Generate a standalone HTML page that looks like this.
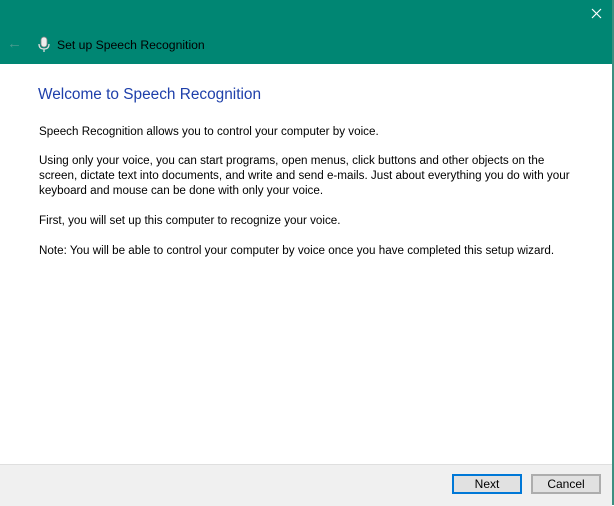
<!DOCTYPE html>
<html><head><style>
body{margin:0;width:614px;height:505px;overflow:hidden;background:#fff;font-family:"Liberation Sans",sans-serif;position:relative}
.hdr{position:absolute;left:0;top:0;width:612px;height:64px;background:#008673}
.rb{position:absolute;right:0;top:0;width:2px;height:505px;background:#3c8f80}
.t{position:absolute;left:57px;top:38px;font-size:12.2px;color:#000}
.arr{position:absolute;left:7px;top:35px;color:#4a9c8f;font-size:15px}
h1{position:absolute;left:38px;top:86px;margin:0;font-weight:normal;font-size:15.4px;color:#1e3faa}
p{position:absolute;left:39px;margin:0;font-size:11.65px;line-height:15px;color:#000;width:545px}
.ft{position:absolute;left:0;top:464px;width:612px;height:41px;background:#f0f0f0;border-top:1px solid #dfdfdf}
.b{position:absolute;top:474px;height:16px;width:66px;background:#e1e1e1;border:2px solid #adadad;font-size:12px;text-align:center;line-height:16px}
</style></head><body>
<div class="hdr"></div><div class="rb"></div>
<svg style="position:absolute;left:591px;top:8px" width="11" height="11"><path d="M1 1L10 10M10 1L1 10" stroke="#fff" stroke-width="1.2"/></svg>
<div class="arr">←</div>
<svg style="position:absolute;left:38px;top:36px" width="12" height="18"><rect x="3" y="1" width="6" height="10" rx="3" fill="#eee" stroke="#888" stroke-width=".8"/><path d="M1 8q0 5 5 5t5-5M6 13v3" stroke="#ddd" fill="none" stroke-width="1.3"/></svg>
<div class="t">Set up Speech Recognition</div>
<h1>Welcome to Speech Recognition</h1>
<p style="top:124px">Speech Recognition allows you to control your computer by voice.</p>
<p style="top:153px">Using only your voice, you can start programs, open menus, click buttons and other objects on the screen, dictate text into documents, and write and send e-mails. Just about everything you do with your keyboard and mouse can be done with only your voice.</p>
<p style="top:213px">First, you will set up this computer to recognize your voice.</p>
<p style="top:243px">Note: You will be able to control your computer by voice once you have completed this setup wizard.</p>
<div class="ft"></div>
<div class="b" style="left:452px;border-color:#0078d7">Next</div>
<div class="b" style="left:531px">Cancel</div>
</body></html>
